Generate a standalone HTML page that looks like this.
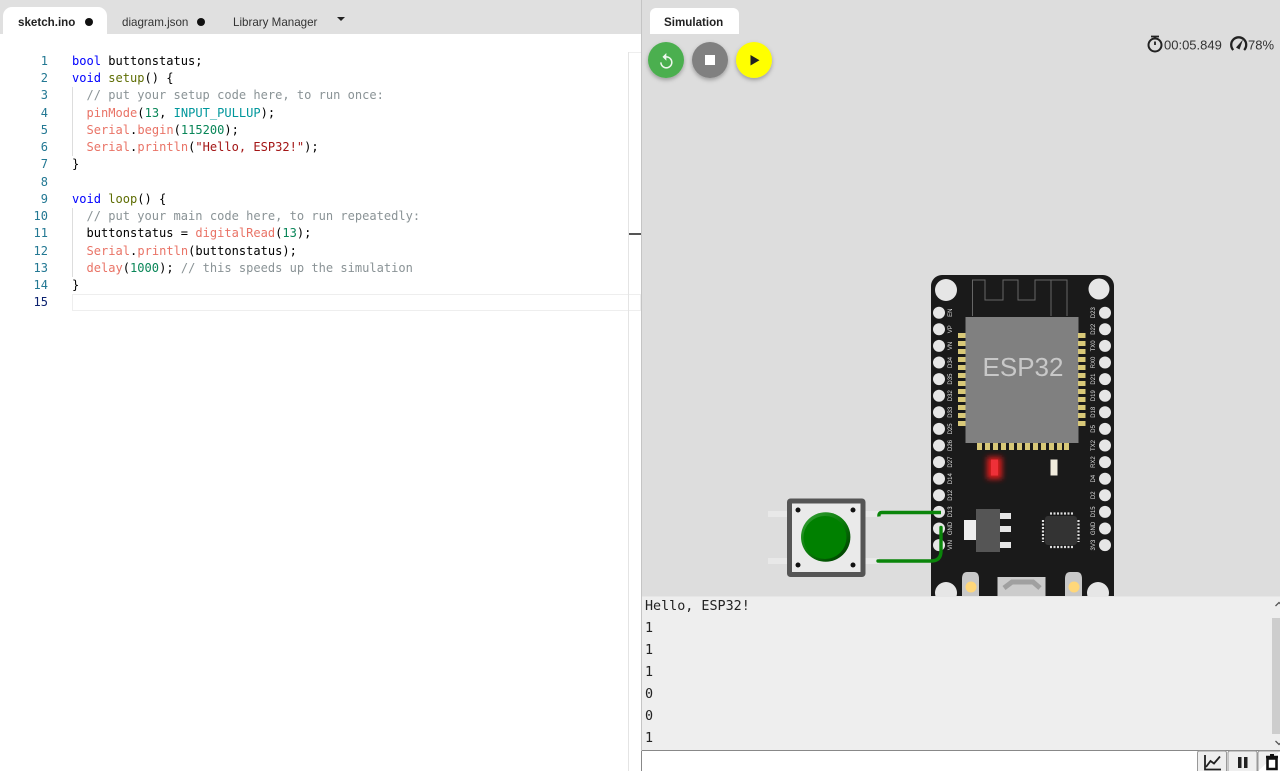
<!DOCTYPE html>
<html><head><meta charset="utf-8"><style>
html,body{margin:0;padding:0;width:1280px;height:771px;overflow:hidden;background:#fff}
.a{position:absolute}
#hdr{left:0;top:0;width:641px;height:34px;background:#e0e0e0}
.tab{position:absolute;font:11.6px/16px "Liberation Sans",sans-serif;color:#333;white-space:nowrap;top:14.5px}
.code{position:absolute;left:72px;font:12.05px/17.25px "DejaVu Sans Mono",monospace;white-space:pre;color:#000;height:17.25px;filter:blur(.25px);margin-top:.4px}
.ln{position:absolute;left:20px;width:28px;text-align:right;font:12px/17.25px "DejaVu Sans Mono",monospace;color:#237893;height:17.25px;margin-top:.4px}
.k{color:#00f}.f{color:#5e6d03}.c{color:#8a9396}.o{color:#e97366}.n{color:#098658}.t{color:#00979c}.s{color:#a31515}
.ser{position:absolute;left:645px;font:13.4px/22px "DejaVu Sans Mono",monospace;color:#222;white-space:pre;margin-top:1px}
</style></head><body>
<div class="a" id="hdr"></div>
<div class="a" style="left:3px;top:7px;width:104px;height:27px;background:#fff;border-radius:9px 9px 0 0"></div>
<div class="tab" style="left:18px;font-weight:bold;color:#222">sketch.ino</div>
<div class="a" style="left:85px;top:18px;width:8px;height:8px;border-radius:50%;background:#111"></div>
<div class="tab" style="left:122px">diagram.json</div>
<div class="a" style="left:197px;top:18px;width:8px;height:8px;border-radius:50%;background:#111"></div>
<div class="tab" style="left:233px">Library Manager</div>
<div class="a" style="left:337px;top:17px;width:0;height:0;border-left:4px solid transparent;border-right:4px solid transparent;border-top:4px solid #222"></div>

<div class="a" style="left:72px;top:294px;width:567px;height:15px;border:1px solid #eee"></div>
<div class="a" style="left:628px;top:52px;width:1px;height:719px;background:#e4e4e4"></div>
<div class="a" style="left:629px;top:52px;width:12px;height:1px;background:#eee"></div>
<div class="a" style="left:629px;top:233px;width:12px;height:1.5px;background:#555"></div>
<div class="a" style="left:72px;top:87px;width:1px;height:69px;background:#ddd"></div>
<div class="a" style="left:72px;top:208px;width:1px;height:69px;background:#ddd"></div>

<div class="ln" style="top:52.5px">1</div><div class="code" style="top:52.5px"><span class="k">bool</span> buttonstatus;</div>
<div class="ln" style="top:69.75px">2</div><div class="code" style="top:69.75px"><span class="k">void</span> <span class="f">setup</span>() {</div>
<div class="ln" style="top:87px">3</div><div class="code" style="top:87px">  <span class="c">// put your setup code here, to run once:</span></div>
<div class="ln" style="top:104.25px">4</div><div class="code" style="top:104.25px">  <span class="o">pinMode</span>(<span class="n">13</span>, <span class="t">INPUT_PULLUP</span>);</div>
<div class="ln" style="top:121.5px">5</div><div class="code" style="top:121.5px">  <span class="o">Serial</span>.<span class="o">begin</span>(<span class="n">115200</span>);</div>
<div class="ln" style="top:138.75px">6</div><div class="code" style="top:138.75px">  <span class="o">Serial</span>.<span class="o">println</span>(<span class="s">"Hello, ESP32!"</span>);</div>
<div class="ln" style="top:156px">7</div><div class="code" style="top:156px">}</div>
<div class="ln" style="top:173.25px">8</div>
<div class="ln" style="top:190.5px">9</div><div class="code" style="top:190.5px"><span class="k">void</span> <span class="f">loop</span>() {</div>
<div class="ln" style="top:207.75px">10</div><div class="code" style="top:207.75px">  <span class="c">// put your main code here, to run repeatedly:</span></div>
<div class="ln" style="top:225px">11</div><div class="code" style="top:225px">  buttonstatus = <span class="o">digitalRead</span>(<span class="n">13</span>);</div>
<div class="ln" style="top:242.25px">12</div><div class="code" style="top:242.25px">  <span class="o">Serial</span>.<span class="o">println</span>(buttonstatus);</div>
<div class="ln" style="top:259.5px">13</div><div class="code" style="top:259.5px">  <span class="o">delay</span>(<span class="n">1000</span>); <span class="c">// this speeds up the simulation</span></div>
<div class="ln" style="top:276.75px">14</div><div class="code" style="top:276.75px">}</div>
<div class="ln" style="top:294px;color:#0b216f">15</div>

<div class="a" style="left:641px;top:0;width:639px;height:771px;background:#ddd;border-left:1px solid #c4c4c4;box-sizing:border-box"></div>
<div class="a" style="left:650px;top:8px;width:89px;height:26px;background:#fff;border-radius:6px 6px 0 0"></div>
<div class="tab" style="left:664px;font-weight:bold;color:#222">Simulation</div>

<svg class="a" style="left:0;top:0" width="1280" height="771" viewBox="0 0 1280 771">
<defs><filter id="sh" x="-30%" y="-30%" width="160%" height="170%"><feDropShadow dx="0" dy="2" stdDeviation="2" flood-opacity=".3"/></filter>
<filter id="gl" x="-150%" y="-100%" width="400%" height="300%"><feGaussianBlur stdDeviation="3"/></filter>
<linearGradient id="bg" x1="0.15" y1="0.1" x2="0.85" y2="0.9"><stop offset="0" stop-color="#2c9a2c"/><stop offset="0.5" stop-color="#0a7a0a"/><stop offset="1" stop-color="#004400"/></linearGradient></defs>
<circle cx="666" cy="60" r="18" fill="#4caf50" filter="url(#sh)"/>
<path transform="translate(657,52.2) scale(.78)" d="M12 5V1L7 6l5 5V7c3.310 0 6 2.690 6 6s-2.690 6-6 6-6-2.690-6-6H4c0 4.420 3.580 8 8 8s8-3.580 8-8-3.580-8-8-8z" fill="#eef7ee"/>
<circle cx="710" cy="60" r="18" fill="#808080" filter="url(#sh)"/>
<rect x="705" y="55" width="10" height="10" fill="#fff"/>
<circle cx="754" cy="60" r="18" fill="#ffff00" filter="url(#sh)"/>
<path d="M750.500 55v10.500l9-5.250z" fill="#222"/>

<g fill="none" stroke="#222">
<circle cx="1155" cy="45" r="6.500" stroke-width="2"/>
<path d="M1151 36.500h8M1155 36.500v3M1155 45v-3.500" stroke-width="1.800"/>
<path d="M1233.300 50a7.500 7.500 0 1 1 10.800 0" stroke-width="2.300"/>
</g>
<path d="M1236 47.500l7-8-3.500 10z" fill="#222"/>
<text x="1164" y="49.500" font-family="Liberation Sans" font-size="13" fill="#333">00:05.849</text>
<text x="1248" y="49.500" font-family="Liberation Sans" font-size="13" fill="#333">78%</text>

<!-- board -->
<rect x="931" y="275" width="183" height="340" rx="11" fill="#1a1a1a"/>
<circle cx="946" cy="290" r="11" fill="#e6e6e6"/>
<circle cx="1099" cy="289" r="10.500" fill="#e6e6e6"/>
<path d="M972.500 316V280H985V300H1003V280H1018V300H1035V280H1067V316M1051 280V316" fill="none" stroke="#666" stroke-width="1"/>
<rect x="965.500" y="317" width="113" height="126" fill="#808080"/>
<text x="1023" y="376" text-anchor="middle" font-family="Liberation Sans" font-size="26" fill="#c8c8c8">ESP32</text>
<g fill="#d8c878" id="pads">
<rect x="958" y="333" width="7.500" height="5"/><rect x="958" y="341" width="7.500" height="5"/><rect x="958" y="349" width="7.500" height="5"/><rect x="958" y="357" width="7.500" height="5"/><rect x="958" y="365" width="7.500" height="5"/><rect x="958" y="373" width="7.500" height="5"/><rect x="958" y="381" width="7.500" height="5"/><rect x="958" y="389" width="7.500" height="5"/><rect x="958" y="397" width="7.500" height="5"/><rect x="958" y="405" width="7.500" height="5"/><rect x="958" y="413" width="7.500" height="5"/><rect x="958" y="421" width="7.500" height="5"/>
<rect x="1078" y="333" width="7.500" height="5"/><rect x="1078" y="341" width="7.500" height="5"/><rect x="1078" y="349" width="7.500" height="5"/><rect x="1078" y="357" width="7.500" height="5"/><rect x="1078" y="365" width="7.500" height="5"/><rect x="1078" y="373" width="7.500" height="5"/><rect x="1078" y="381" width="7.500" height="5"/><rect x="1078" y="389" width="7.500" height="5"/><rect x="1078" y="397" width="7.500" height="5"/><rect x="1078" y="405" width="7.500" height="5"/><rect x="1078" y="413" width="7.500" height="5"/><rect x="1078" y="421" width="7.500" height="5"/>
<rect x="977" y="443" width="5" height="7"/><rect x="985" y="443" width="5" height="7"/><rect x="993" y="443" width="5" height="7"/><rect x="1001" y="443" width="5" height="7"/><rect x="1009" y="443" width="5" height="7"/><rect x="1017" y="443" width="5" height="7"/><rect x="1025" y="443" width="5" height="7"/><rect x="1033" y="443" width="5" height="7"/><rect x="1041" y="443" width="5" height="7"/><rect x="1049" y="443" width="5" height="7"/><rect x="1057" y="443" width="5" height="7"/><rect x="1064" y="443" width="5" height="7"/>
</g>
<g fill="#e6e6e6">
<circle cx="939" cy="312.700" r="6"/><circle cx="939" cy="329.300" r="6"/><circle cx="939" cy="345.900" r="6"/><circle cx="939" cy="362.500" r="6"/><circle cx="939" cy="379.100" r="6"/><circle cx="939" cy="395.700" r="6"/><circle cx="939" cy="412.300" r="6"/><circle cx="939" cy="428.900" r="6"/><circle cx="939" cy="445.500" r="6"/><circle cx="939" cy="462.100" r="6"/><circle cx="939" cy="478.700" r="6"/><circle cx="939" cy="495.300" r="6"/><circle cx="939" cy="511.900" r="6"/><circle cx="939" cy="528.500" r="6"/><circle cx="939" cy="545.100" r="6"/>
<circle cx="1105" cy="312.700" r="6"/><circle cx="1105" cy="329.300" r="6"/><circle cx="1105" cy="345.900" r="6"/><circle cx="1105" cy="362.500" r="6"/><circle cx="1105" cy="379.100" r="6"/><circle cx="1105" cy="395.700" r="6"/><circle cx="1105" cy="412.300" r="6"/><circle cx="1105" cy="428.900" r="6"/><circle cx="1105" cy="445.500" r="6"/><circle cx="1105" cy="462.100" r="6"/><circle cx="1105" cy="478.700" r="6"/><circle cx="1105" cy="495.300" r="6"/><circle cx="1105" cy="511.900" r="6"/><circle cx="1105" cy="528.500" r="6"/><circle cx="1105" cy="545.100" r="6"/>
</g>
<g font-family="Liberation Sans" font-size="6" fill="#ddd" text-anchor="middle">
<text transform="translate(952,312.700) rotate(-90)">EN</text><text transform="translate(952,329.300) rotate(-90)">VP</text><text transform="translate(952,345.900) rotate(-90)">VN</text><text transform="translate(952,362.500) rotate(-90)">D34</text><text transform="translate(952,379.100) rotate(-90)">D35</text><text transform="translate(952,395.700) rotate(-90)">D32</text><text transform="translate(952,412.300) rotate(-90)">D33</text><text transform="translate(952,428.900) rotate(-90)">D25</text><text transform="translate(952,445.500) rotate(-90)">D26</text><text transform="translate(952,462.100) rotate(-90)">D27</text><text transform="translate(952,478.700) rotate(-90)">D14</text><text transform="translate(952,495.300) rotate(-90)">D12</text><text transform="translate(952,511.900) rotate(-90)">D13</text><text transform="translate(952,528.500) rotate(-90)">GND</text><text transform="translate(952,545.100) rotate(-90)">VIN</text>
<text transform="translate(1095,312.700) rotate(-90)">D23</text><text transform="translate(1095,329.300) rotate(-90)">D22</text><text transform="translate(1095,345.900) rotate(-90)">TX0</text><text transform="translate(1095,362.500) rotate(-90)">RX0</text><text transform="translate(1095,379.100) rotate(-90)">D21</text><text transform="translate(1095,395.700) rotate(-90)">D19</text><text transform="translate(1095,412.300) rotate(-90)">D18</text><text transform="translate(1095,428.900) rotate(-90)">D5</text><text transform="translate(1095,445.500) rotate(-90)">TX2</text><text transform="translate(1095,462.100) rotate(-90)">RX2</text><text transform="translate(1095,478.700) rotate(-90)">D4</text><text transform="translate(1095,495.300) rotate(-90)">D2</text><text transform="translate(1095,511.900) rotate(-90)">D15</text><text transform="translate(1095,528.500) rotate(-90)">GND</text><text transform="translate(1095,545.100) rotate(-90)">3V3</text>
</g>
<rect x="987" y="457" width="15" height="22" fill="#ff1a1a" filter="url(#gl)" opacity=".85"/>
<rect x="991" y="459.500" width="7" height="16" fill="#ee3038"/>
<rect x="1050.500" y="459.500" width="7" height="16" fill="#f0ebdc"/>
<rect x="976" y="509" width="24" height="43" fill="#555"/>
<rect x="964" y="520" width="12" height="20" fill="#eee"/>
<rect x="1000" y="513" width="11" height="6" fill="#e6e6e6"/><rect x="1000" y="526" width="11" height="6" fill="#e6e6e6"/><rect x="1000" y="542" width="11" height="6" fill="#e6e6e6"/>
<rect x="1045" y="516" width="32" height="29" rx="3" fill="#333"/>
<g stroke="#ddd" stroke-width="2.200" stroke-dasharray="2 1.500" fill="none">
<path d="M1050 513.500h24M1050 547h24M1043 520v22M1078.500 520v22"/>
</g>
<path d="M962 579q0-7 5-7h7q5 0 5 7v17h-17z" fill="#c8c8c8"/><circle cx="971" cy="587" r="5.500" fill="#ffd77a"/>
<path d="M1065 579q0-7 5-7h7q5 0 5 7v17h-17z" fill="#c8c8c8"/><circle cx="1074" cy="587" r="5.500" fill="#ffd77a"/>
<rect x="997.500" y="577" width="48" height="19" fill="#ccc"/>
<path d="M1004 588l8-6h21l7 6" fill="none" stroke="#a0a0a0" stroke-width="5"/>
<circle cx="946" cy="593" r="11" fill="#e6e6e6"/><circle cx="1098" cy="593" r="11" fill="#e6e6e6"/>

<!-- button -->
<rect x="768" y="511" width="20" height="6" fill="#e8e8e8"/><rect x="768" y="558" width="20" height="6" fill="#e8e8e8"/>
<rect x="865" y="511" width="14" height="6" fill="#e8e8e8"/><rect x="865" y="558" width="14" height="6" fill="#e8e8e8"/>
<rect x="789.500" y="501" width="73.500" height="73.500" rx="1" fill="#eaeaea" stroke="#555" stroke-width="5"/>
<circle cx="798" cy="510" r="2.500" fill="#111"/><circle cx="853" cy="510" r="2.500" fill="#111"/><circle cx="798" cy="565" r="2.500" fill="#111"/><circle cx="853" cy="565" r="2.500" fill="#111"/>
<circle cx="825.700" cy="537" r="24.700" fill="url(#bg)"/>
<circle cx="825" cy="537.500" r="21.500" fill="#008000"/>
<!-- wires -->
<path d="M879 516.500q-.500-4 3-4H941" fill="none" stroke="#0a850a" stroke-width="3.400"/>
<path d="M878 561H931q10 0 10-10V527.500" fill="none" stroke="#0a850a" stroke-width="3.400" stroke-linecap="round"/>
</svg>

<div class="a" style="left:642px;top:596px;width:638px;height:155px;background:#eee;border-top:1px solid #e6e6e6;box-sizing:border-box;border-bottom:1px solid #888"></div>
<div class="ser" style="top:595px">Hello, ESP32!</div>
<div class="ser" style="top:617px">1</div>
<div class="ser" style="top:639px">1</div>
<div class="ser" style="top:661px">1</div>
<div class="ser" style="top:683px">0</div>
<div class="ser" style="top:705px">0</div>
<div class="ser" style="top:727px">1</div>
<div class="a" style="left:1272px;top:618px;width:8px;height:116px;background:#cdcdcd"></div>
<div class="a" style="left:641px;top:751px;width:639px;height:20px;background:#fff;border-left:1px solid #888;box-sizing:border-box"></div>
<svg class="a" style="left:0;top:0" width="1280" height="771" viewBox="0 0 1280 771">
<path d="M1275.500 606l3.500-3.500 3.500 3.500M1275.500 741l3.500 3.500 3.500-3.500" fill="none" stroke="#555" stroke-width="1.300"/>
<path d="M1197.500 771V753q0-2 2-2h25q2 0 2 2v18M1228 771V753q0-2 2-2h25q2 0 2 2v18M1258 771V753q0-2 2-2h20" fill="#efefef" stroke="#999" stroke-width="1"/>
<path d="M1205 755v14.500h16" fill="none" stroke="#222" stroke-width="1.800"/>
<path d="M1206 767l4.500-6 3.500 2.500 6-7" fill="none" stroke="#222" stroke-width="1.800"/>
<rect x="1238" y="757" width="3.500" height="11" fill="#222"/><rect x="1244" y="757" width="3.500" height="11" fill="#222"/>
<path d="M1267.500 758.500h9v10.500h-9zM1266 757h12" fill="none" stroke="#111" stroke-width="2.600"/>
<path d="M1270 755h4" stroke="#111" stroke-width="2"/>
</svg>
</body></html>
